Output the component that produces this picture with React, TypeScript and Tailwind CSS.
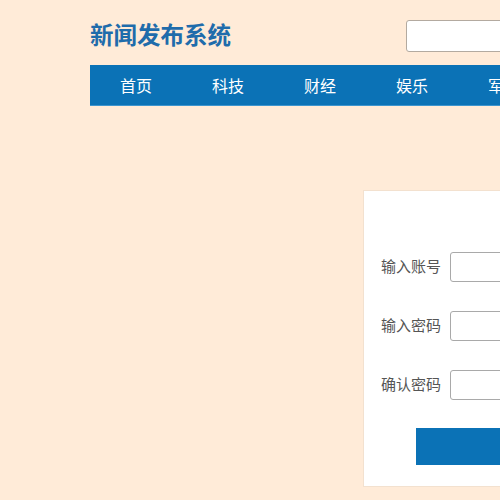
const fields = ['输入账号', '输入密码', '确认密码'];
const navItems = ['首页', '科技', '财经', '娱乐', '军事'];

export default function App() {
  return (
    <div
      className="min-h-[500px] h-[500px] w-full overflow-hidden bg-[#ffebd8]"
      style={{ fontFamily: '"Microsoft YaHei", "Noto Sans CJK SC", sans-serif' }}
    >
      <div className="ml-[90px] w-[1000px]">
        <header className="flex h-[65px] items-start">
          <h1 className="mt-[19px] w-[316px] text-[23.5px] font-bold leading-[30px] text-[#1f6cab]">
            新闻发布系统
          </h1>
          <input
            type="text"
            className="mt-[20px] h-[32px] w-[260px] rounded-[3px] border border-[#b3aaa0] bg-white px-2 outline-none"
          />
        </header>

        <nav className="flex h-[41px] items-center border-b border-[#3d95cf] bg-[#0b72b6]">
          {navItems.map((item) => (
            <a key={item} className="w-[92px] shrink-0 text-center text-[16px] text-white">
              {item}
            </a>
          ))}
        </nav>

        <div className="ml-[273px] mt-[84px] h-[297px] w-[360px] border border-[#f3e1cf] bg-white pl-[17px] pt-[61px]">
          <div className="flex flex-col gap-[29px]">
            {fields.map((label) => (
              <div key={label} className="flex items-center">
                <span className="-mt-[2px] text-[15px] text-[#555]">{label}</span>
                <input
                  type={label === '输入账号' ? 'text' : 'password'}
                  className="ml-[9px] h-[30px] w-[220px] rounded-[3px] border border-[#a9a9a9] bg-white outline-none"
                />
              </div>
            ))}
          </div>
          <button className="ml-[35px] mt-[28px] h-[37px] w-[260px] bg-[#0b72b6] text-[16px] text-white">
            注册
          </button>
        </div>
      </div>
    </div>
  );
}
